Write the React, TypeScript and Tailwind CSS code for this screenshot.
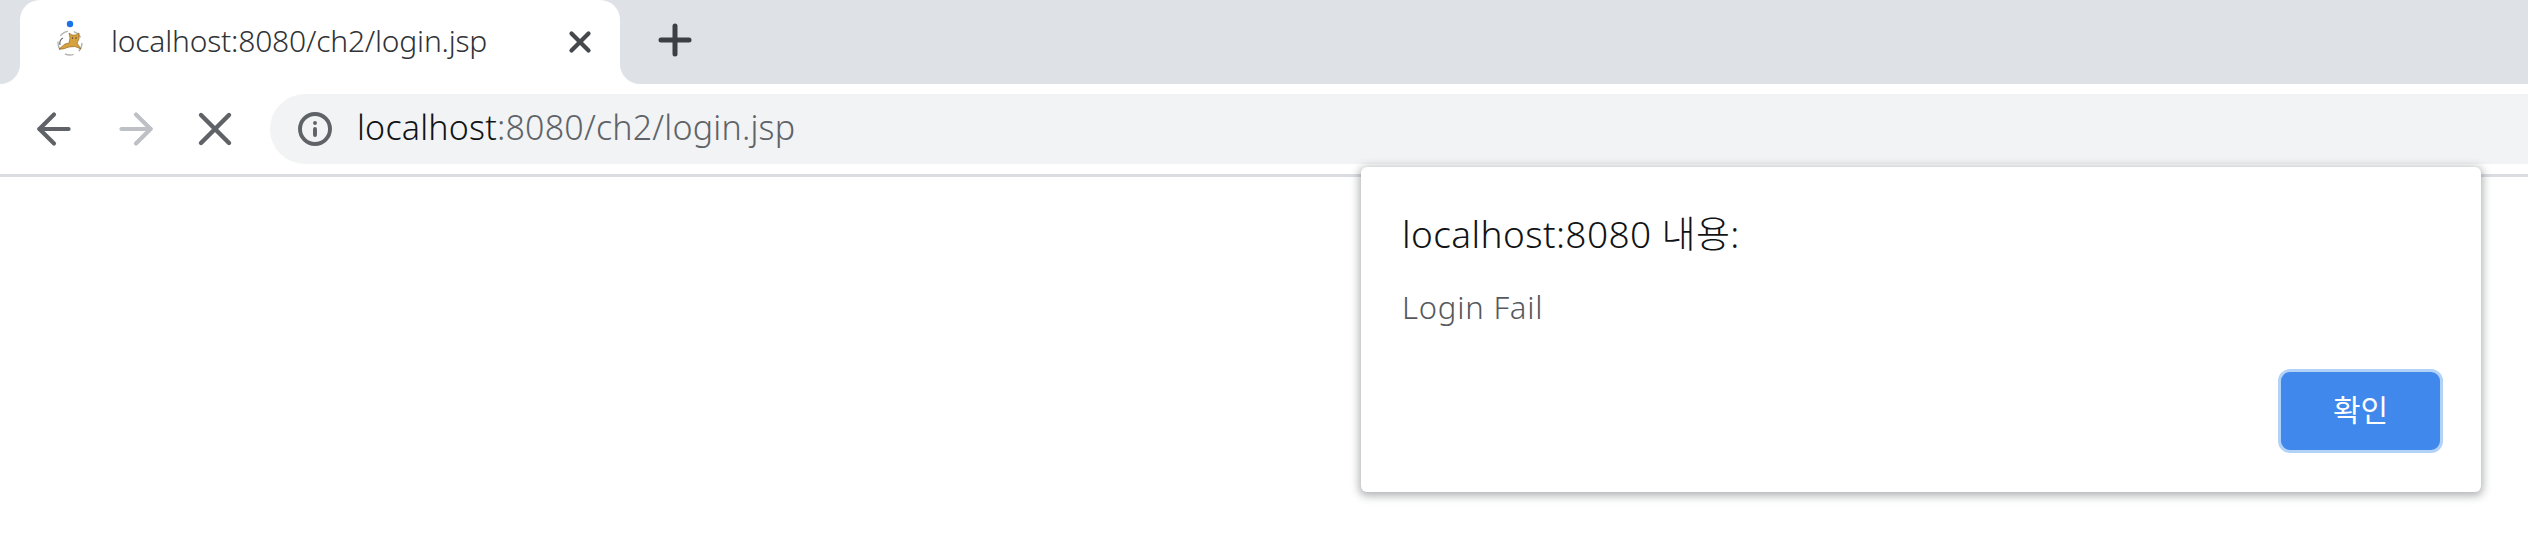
import { ArrowLeft, ArrowRight, Info, Plus, X } from 'lucide-react';

const UI_FONT = "font-['Noto_Sans','Noto_Sans_CJK_KR',sans-serif]";

// Tomcat favicon with the blue loading dot above it
function TabFavicon() {
  return (
    <svg width="30" height="40" viewBox="0 0 30 40" className="mb-1 shrink-0">
      <circle cx="15" cy="4" r="3.2" fill="#1a73e8" />
      <circle cx="15" cy="23" r="12" fill="#fff" stroke="#b4b4b4" strokeWidth="1.4" strokeDasharray="9 6" />
      <path d="M4 29 L10 24 L14 23 L15 18 L14 13 L17 15 L21 15 L24 13 L24 19 L22 23 L26 29 L20 26.5 L14 27 L8 29 Z" fill="#d6a23f" stroke="#8a5a14" strokeWidth="0.6" />
      <path d="M5 25 Q4 20 8 18" fill="none" stroke="#666" strokeWidth="1.1" />
      <circle cx="17.5" cy="18" r="0.7" fill="#333" />
      <circle cx="21" cy="18" r="0.7" fill="#333" />
    </svg>
  );
}

function TabStrip() {
  return (
    <div className="flex h-[84px] items-stretch bg-[#dee1e6] pl-5">
      <div className="relative flex w-[600px] items-center rounded-t-[20px] bg-white pl-[35px] pr-[23px]">
        <span className="absolute bottom-0 left-[-20px] h-5 w-5 bg-[radial-gradient(circle_at_0_0,#dee1e6_19.5px,#ffffff_20.5px)]" />
        <span className="absolute bottom-0 right-[-20px] h-5 w-5 bg-[radial-gradient(circle_at_100%_0,#dee1e6_19.5px,#ffffff_20.5px)]" />
        <TabFavicon />
        <span className="ml-[26px] flex-1 pb-1 text-[30px] font-light tracking-[-0.2px] text-[#303336]">localhost:8080/ch2/login.jsp</span>
        <X size={34} strokeWidth={3} className="text-[#45484c]" />
      </div>
      <div className="ml-[31px] flex items-center pb-1">
        <Plus size={48} strokeWidth={2.5} className="text-[#3c4043]" />
      </div>
    </div>
  );
}

function Toolbar() {
  return (
    <div className="flex h-[93px] items-start border-b-[3px] border-[#dadce0] bg-white pt-[10px]">
      <div className="flex h-[70px] w-[270px] shrink-0 items-center pl-[29px]">
        <ArrowLeft size={50} strokeWidth={2} className="text-[#5f6368]" />
        <ArrowRight size={50} strokeWidth={2} className="ml-[32px] text-[#bdc1c6]" />
        <X size={56} strokeWidth={1.9} className="ml-[26px] text-[#5f6368]" />
      </div>
      <div className="flex h-[70px] flex-1 items-center rounded-l-[35px] bg-[#f1f3f4] pl-[27px]">
        <Info size={36} strokeWidth={2.6} className="text-[#5f6368]" />
        <span className="ml-[24px] pb-1 text-[34px] font-light tracking-[0.2px] text-[#5f6368]">
          <span className="text-[#111315]">localhost</span>:8080/ch2/login.jsp
        </span>
      </div>
    </div>
  );
}

function AlertDialog() {
  return (
    <div className="absolute left-[1361px] top-[167px] h-[325px] w-[1120px] rounded-[6px] bg-white pl-[41px] pr-[38px] pt-[39px] shadow-[0_2px_8px_2px_rgba(60,64,67,0.4)]">
      <div className="text-[37px] font-light leading-[56px] tracking-[0.4px] text-[#111315]">localhost:8080 내용:</div>
      <div className="mt-[23px] text-[31px] font-light leading-[44px] tracking-[0.8px] text-[#55585c]">Login Fail</div>
      <div className="mt-[40px] flex justify-end">
        <button className="h-[84px] w-[165px] rounded-[12px] border-[3px] border-[#b3d2f8] bg-[#4088ec] pb-1 text-[30px] text-white">
          확인
        </button>
      </div>
    </div>
  );
}

export default function App() {
  return (
    <div className={`relative h-[544px] w-[2528px] overflow-hidden bg-white ${UI_FONT}`}>
      <TabStrip />
      <Toolbar />
      <AlertDialog />
    </div>
  );
}
